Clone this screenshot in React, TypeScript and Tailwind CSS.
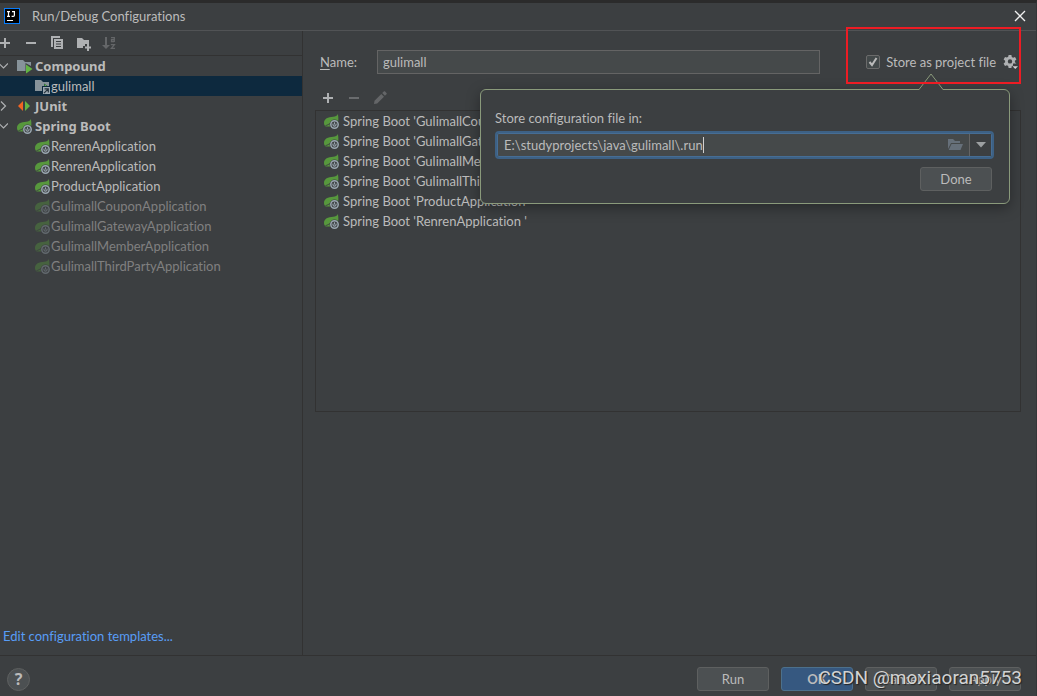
import { useState } from 'react'
import type { ReactNode } from 'react'

const configs = [
    { name: 'RenrenApplication', dim: false },
    { name: 'RenrenApplication', dim: false },
    { name: 'ProductApplication', dim: false },
    { name: 'GulimallCouponApplication', dim: true },
    { name: 'GulimallGatewayApplication', dim: true },
    { name: 'GulimallMemberApplication', dim: true },
    { name: 'GulimallThirdPartyApplication', dim: true },
]

const members = [
    'GulimallCouponApplication',
    'GulimallGatewayApplication',
    'GulimallMemberApplication',
    'GulimallThirdPartyApplication',
    'ProductApplication',
    'RenrenApplication ',
]

function Icon({ children, className = '' }: { children: ReactNode, className?: string }) {
    return (
        <svg viewBox="0 0 16 16" aria-hidden="true" className={`size-4 shrink-0 ${className}`} fill="none">
            {children}
        </svg>
    )
}

function PlusIcon() {
    return <Icon><path fill="#afb1b3" d="M7 3h2v4h4v2H9v4H7V9H3V7h4z" /></Icon>
}

function MinusIcon({ className = '' }: { className?: string }) {
    return <Icon className={className}><path fill="#afb1b3" d="M3 7h10v2H3z" /></Icon>
}

function CopyIcon() {
    return (
        <Icon>
            <path fill="#afb1b3" d="M2 1h9v2H4v9H2z" />
            <path fill="#afb1b3" fillRule="evenodd" d="M5 4h9v10H5zM7 6v1h5V6zM7 8.500v1h5v-1zM7 11v1h5v-1z" />
        </Icon>
    )
}

function NewFolderIcon() {
    return (
        <Icon>
            <path fill="#afb1b3" d="M2 3h5l2 2h5v4h-4v2H8v2H2z" />
            <path fill="#afb1b3" d="M12 9h2v2.500h2v2h-2V16h-2v-2.500h-2v-2h2z" />
        </Icon>
    )
}

function SortIcon() {
    return (
        <Icon>
            <path fill="#646668" d="M4 2h2v8h3l-4 4-4-4h3z" />
            <path stroke="#646668" strokeWidth="1.300" d="M10 2.600h3.300V7M13 4.600h-2.500v1.900H13M9.800 9.600h3.600L10.400 13.400h3.600" />
        </Icon>
    )
}

function CompoundIcon() {
    return (
        <Icon>
            <path fill="#87939a" d="M0 2h6l2 2h6v4L8.500 5v8H0z" />
            <path fill="#62b543" d="M9 6.500 15.500 11 9 15.500z" />
        </Icon>
    )
}

function GulimallIcon() {
    return (
        <Icon>
            <path fill="#87939a" d="M0 2h6l2 2h6v4h-1.500L9 5.500V8H7v5H0z" />
            <path fill="#62b543" d="M9.500 5.800 12 8H9.500z" />
            <path fill="#9aa7b0" d="M8 9h7v7H8z" />
            <path stroke="#25333d" strokeWidth="1.200" d="M9.500 10.800h3.800v3.800M13.300 10.800 9 15.200" />
        </Icon>
    )
}

function JUnitIcon() {
    return (
        <Icon>
            <path fill="#f26522" d="M6 3v10L1 8z" />
            <path fill="#62b543" d="M8 3v10l5-5z" />
        </Icon>
    )
}

function SpringIcon({ dim = false }: { dim?: boolean }) {
    return (
        <Icon className={dim ? 'opacity-40' : ''}>
            <path fill="#57983d" d="M13.800 1c-.8 2-2.300 2.500-4.600 2.700C4 4.100 0 5.500 0 10c0 1.500.6 2.600 1.700 3.400H6c-.2-3 2-6.100 5-6.100 1.200 0 2.300.4 3.200 1.100.3-2.400.3-4.800-.4-7.400z" />
            <path stroke="#3c3f41" strokeWidth=".9" d="M1.500 12.600c2-.4 3.500-1.300 5-2.800" />
            <circle cx="10.500" cy="11.500" r="4.900" fill="#3c3f41" />
            <circle cx="10.500" cy="11.500" r="3.700" stroke="#9aa7b0" strokeWidth="1.500" />
            <path stroke="#9aa7b0" strokeWidth="1.100" d="M10.500 9.300v2.300M9 10.600c-.8 3.300 3.800 3.300 3 0" />
        </Icon>
    )
}

function PencilIcon() {
    return (
        <Icon>
            <path fill="#646668" d="m2 14 .5-3.200L9.300 4 12 6.700 5.200 13.500zM10.200 3.100 11.800 1.500c.4-.4.9-.4 1.300 0l1.400 1.400c.4.4.4.9 0 1.300l-1.600 1.600z" />
        </Icon>
    )
}

function GearIcon() {
    return (
        <Icon>
            <path
                fill="#afb1b3"
                fillRule="evenodd"
                d="M5.600 1h2.800l.4 1.900 1.300.8 1.900-.6 1.400 2.400-1.500 1.300v1.500l1.500 1.300H10v2.200l-1.200.3-.4 1.900H5.600l-.4-1.900-1.300-.8-1.900.6L.6 9.500l1.500-1.300V6.700L.6 5.400 2 3l1.900.6 1.300-.8zM7 5.200a2.200 2.200 0 1 0 0 4.400 2.200 2.200 0 0 0 0-4.400z"
            />
            <path fill="#d0d2d4" d="M9.500 12.300h5.500l-2.700 2.700z" />
        </Icon>
    )
}

function Chevron({ open = false }: { open?: boolean }) {
    return (
        <svg viewBox="0 0 8 10" aria-hidden="true" className="h-2.5 w-2 shrink-0" fill="none" stroke="#afb1b3" strokeWidth="1.2">
            {open ? <path d="M-1 2.500 3.500 7 8 2.500" /> : <path d="M1 .5 5.500 5 1 9.500" />}
        </svg>
    )
}

function TreeGroup({ label, icon, open = false }: { label: string, icon: ReactNode, open?: boolean }) {
    return (
        <button type="button" aria-expanded={open} className="flex h-5 w-full items-center text-left font-['Noto_Sans',sans-serif] font-bold">
            <Chevron open={open} />
            <span className="ml-[9px] mr-0.5">{icon}</span>
            {label}
        </button>
    )
}

function DialogButton({ children, primary = false }: { children: ReactNode, primary?: boolean }) {
    return (
        <button
            type="button"
            className={
                primary
                    ? 'h-6 w-[72px] rounded-[3px] border border-[#4c708c] bg-[#365880] font-bold'
                    : 'h-6 w-[72px] rounded-[3px] border border-[#5e6060] bg-[#4c5052]'
            }
        >
            {children}
        </button>
    )
}

function StorePopup() {
    const [path, setPath] = useState('E:\\studyprojects\\java\\gulimall\\.run')

    return (
        <div className="absolute right-[11px] top-[37px] z-10 h-[115px] w-[530px] rounded-md border border-[#8a9a7b] bg-[#3c3f41] px-3.5 pt-[18px] shadow-[0_4px_14px_rgba(0,0,0,0.35)]">
            <svg viewBox="0 0 26 18" aria-hidden="true" className="absolute -top-[17px] right-[65px] h-[18px] w-[26px]">
                <path fill="#3c3f41" stroke="#8a9a7b" d="M0 16.500h1L13 1l12 15.500h1" />
                <path fill="#3c3f41" d="M1.600 16h22.800v2H1.600z" />
            </svg>
            <label htmlFor="store-path" className="block h-5 leading-5">Store configuration file in:</label>
            <div className="mr-px mt-[3px] flex h-7 items-stretch rounded border-2 border-[#3d6185] bg-[#45494a] p-px ring-1 ring-inset ring-[#466d94]">
                <div className="flex min-w-0 flex-1 items-center pl-1.5">
                    <input
                        id="store-path"
                        value={path}
                        onChange={(e) => setPath(e.target.value)}
                        className="field-sizing-content h-5 bg-transparent outline-none"
                    />
                    <span className="h-4 w-px bg-[#d0d0d0]" />
                </div>
                <button type="button" aria-label="Browse" className="px-1.5">
                    <Icon>
                        <path fill="#66707a" d="M1 2h5l2 2h5v2H4l-3 6z" />
                        <path fill="#66707a" d="M4.500 7H16l-2.500 6H1.700z" />
                    </Icon>
                </button>
                <button type="button" aria-label="Recent locations" className="flex w-[22px] items-center justify-center border-l border-[#646464] bg-[#3c3f41]">
                    <svg viewBox="0 0 10 6" aria-hidden="true" className="h-1.5 w-2.5"><path fill="#9da0a2" d="M0 0h10L5 5.500z" /></svg>
                </button>
            </div>
            <div className="mt-2 flex justify-end pr-[3px]">
                <DialogButton>Done</DialogButton>
            </div>
        </div>
    )
}

export default function App() {
    const [name, setName] = useState('gulimall')
    const [stored, setStored] = useState(true)

    return (
        <div className="relative flex h-screen min-h-[540px] flex-col overflow-hidden border-r border-t-[3px] border-r-[#343638] border-t-[#2b2b2b] bg-[#3c3f41] font-['Lato',sans-serif] text-[13px] leading-5 text-[#bbbbbb] [font-variant-ligatures:none]">
            <header className="flex h-7 shrink-0 items-center border-b border-[#515355] pb-0.5 pl-1 pr-2.5">
                <svg viewBox="0 0 16 16" aria-hidden="true" className="size-4">
                    <rect x=".5" y=".5" width="15" height="15" fill="#000" stroke="#087cfa" />
                    <path fill="none" stroke="#fff" strokeWidth="1.200" d="M3 3.600h3M4.500 3.600v4.800M3 8.400h3M8 3.600h3M10.400 3.600v3.600q0 1.200-1.200 1.200H7.600M3 12.500h6" />
                </svg>
                <h1 className="ml-3 flex-1">Run/Debug Configurations</h1>
                <button type="button" aria-label="Close">
                    <svg viewBox="0 0 12 12" aria-hidden="true" className="size-3" fill="none" stroke="#f0f0f0" strokeWidth="1.300">
                        <path d="m1 1 10 10M11 1 1 11" />
                    </svg>
                </button>
            </header>

            <div className="flex min-h-0 flex-1">
                <aside className="flex w-[303px] shrink-0 flex-col border-r border-[#323232]">
                    <div className="flex h-[25px] shrink-0 items-center gap-2.5 overflow-hidden border-b border-[#323232]">
                        <button type="button" aria-label="Add" className="-ml-[3px]"><PlusIcon /></button>
                        <button type="button" aria-label="Remove"><MinusIcon /></button>
                        <button type="button" aria-label="Copy"><CopyIcon /></button>
                        <button type="button" aria-label="New folder"><NewFolderIcon /></button>
                        <button type="button" aria-label="Sort" disabled><SortIcon /></button>
                    </div>
                    <nav className="flex-1">
                        <TreeGroup label="Compound" icon={<CompoundIcon />} open />
                        <button type="button" className="flex h-5 w-full items-center bg-[#0d293e] pl-[35px] text-left">
                            <GulimallIcon />
                            gulimall
                        </button>
                        <TreeGroup label="JUnit" icon={<JUnitIcon />} />
                        <TreeGroup label="Spring Boot" icon={<SpringIcon />} open />
                        {configs.map((config, i) => (
                            <button
                                key={i}
                                type="button"
                                className={`flex h-5 w-full items-center pl-[35px] text-left ${config.dim ? 'text-[#808080]' : ''}`}
                            >
                                <SpringIcon dim={config.dim} />
                                {config.name}
                            </button>
                        ))}
                    </nav>
                    <a href="#templates" className="mb-[9px] ml-[3px] self-start text-[#589df6]">Edit configuration templates...</a>
                </aside>

                <main className="flex min-w-0 flex-1 flex-col pl-3 pr-[15px] pt-[19px]">
                    <div className="flex h-6 items-center pl-[5px]">
                        <label htmlFor="config-name" className="w-[57px] shrink-0"><span className="underline underline-offset-2">N</span>ame:</label>
                        <input
                            id="config-name"
                            value={name}
                            onChange={(e) => setName(e.target.value)}
                            className="h-6 min-w-0 flex-1 border border-[#646464] bg-[#45494a] px-[5px] outline-none"
                        />
                        <div className="relative ml-[46px] flex shrink-0 items-center pr-0.5">
                            <div className="pointer-events-none absolute -left-5 right-0 -top-[25px] z-20 h-[57px] border-2 border-[#ed1c24]" />
                            <label className="relative flex items-center">
                                <input
                                    type="checkbox"
                                    checked={stored}
                                    onChange={(e) => setStored(e.target.checked)}
                                    className="mr-1.5 size-3.5 appearance-none rounded-[2px] border border-[#6b6b6b] bg-[#43494a]"
                                />
                                {stored && (
                                    <svg viewBox="0 0 14 14" aria-hidden="true" className="absolute left-0 size-3.5" fill="none" stroke="#bbbbbb" strokeWidth="2">
                                        <path d="m3.500 7 2.500 3 4.500-7" />
                                    </svg>
                                )}
                                Store as project file
                            </label>
                            <button type="button" aria-label="Storage settings" className="ml-[7px]"><GearIcon /></button>
                            {stored && <StorePopup />}
                        </div>
                    </div>

                    <div className="mt-3 flex h-6 items-center gap-2.5 pl-[5px]">
                        <button type="button" aria-label="Add configuration"><PlusIcon /></button>
                        <button type="button" aria-label="Remove configuration" disabled><MinusIcon className="opacity-40" /></button>
                        <button type="button" aria-label="Edit configuration" disabled><PencilIcon /></button>
                    </div>
                    <ul className="h-[302px] border border-[#323232] pl-2">
                        {members.map((member) => (
                            <li key={member} className="flex h-5 items-center gap-[3px] whitespace-pre">
                                <SpringIcon />
                                {`Spring Boot '${member}'`}
                            </li>
                        ))}
                    </ul>
                </main>
            </div>

            <footer className="flex h-[41px] shrink-0 items-center border-t border-[#323232] pl-[7px] pr-[15px] pt-1.5">
                <button type="button" aria-label="Help" className="size-[23px] rounded-full border border-[#5e6060] bg-[#4c5052] font-['Noto_Sans',sans-serif] text-base font-bold leading-5">?</button>
                <div className="ml-auto flex gap-3">
                    <DialogButton>Run</DialogButton>
                    <DialogButton primary>OK</DialogButton>
                    <DialogButton>Cancel</DialogButton>
                    <DialogButton>Apply</DialogButton>
                </div>
            </footer>

            <p className="pointer-events-none absolute bottom-1.5 right-3.5 font-['Roboto',sans-serif] text-[19px] leading-6 text-[#d2d3d3] [text-shadow:1px_1px_1px_#222]">
                CSDN @moxiaoran5753
            </p>
        </div>
    )
}
